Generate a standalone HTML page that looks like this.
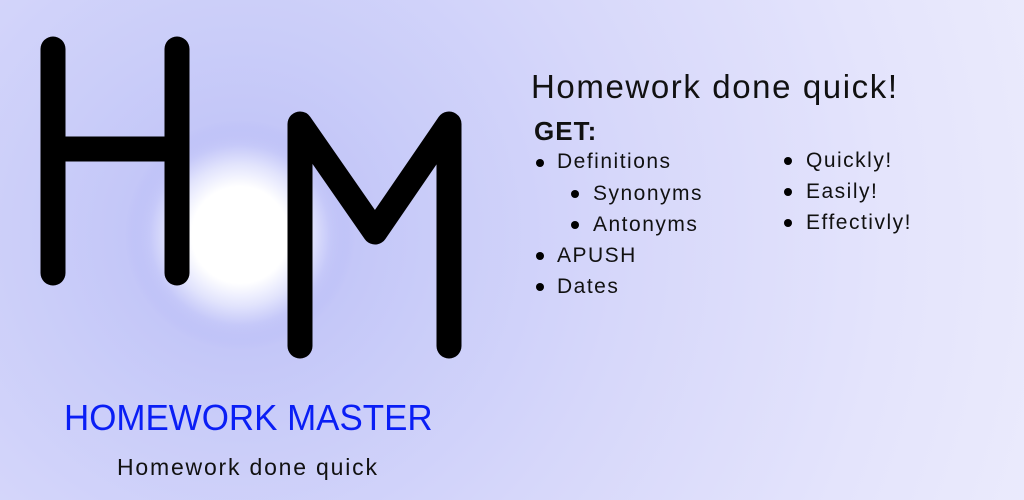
<!DOCTYPE html>
<html><head><style>
html,body{margin:0;padding:0}
body{width:1024px;height:500px;overflow:hidden;position:relative;font-family:"Liberation Sans",sans-serif;
background:radial-gradient(circle at 240px 235px,#ffffff 0,#ffffff 35px,#c2c5f8 90px,#cacdf9 200px,#d6d7fa 380px,#e4e4fc 650px,#ededfd 900px);}
.t{position:absolute;white-space:nowrap;color:#111;font-weight:300}
.b{position:absolute;width:8px;height:8px;border-radius:50%;background:#000}
</style></head><body>
<svg width="1024" height="500" style="position:absolute;left:0;top:0">
<defs><radialGradient id="g" cx="240" cy="235" r="115" gradientUnits="userSpaceOnUse">
<stop offset="0" stop-color="#fff"/><stop offset="0.42" stop-color="#fff"/><stop offset="0.62" stop-color="#e4e6fd" stop-opacity="0.8"/><stop offset="1" stop-color="#a8acf6" stop-opacity="0"/></radialGradient></defs>
<circle cx="240" cy="235" r="115" fill="url(#g)"/>
<g stroke="#000" stroke-width="25" stroke-linecap="round" stroke-linejoin="round" fill="none">
<path d="M53 49V273M177 49V273M53 149H177"/>
<path d="M300 346V124L375 232L449 124V346"/>
</g>
</svg>
<div class="t" style="left:64px;top:397px;font-size:36px;color:#0a1ef5;letter-spacing:0;transform:scaleX(0.97);transform-origin:0 0">HOMEWORK MASTER</div>
<div class="t" style="left:117px;top:454px;font-size:23px;letter-spacing:1.8px">Homework done quick</div>
<div class="t" style="left:531px;top:68px;font-size:33px;letter-spacing:1.6px">Homework done quick!</div>
<div class="t" style="left:534px;top:116px;font-size:26px;font-weight:bold;letter-spacing:1px">GET:</div>
<div class="b" style="left:536px;top:159px"></div><div class="t" style="left:557px;top:150px;font-size:21px;letter-spacing:1.5px">Definitions</div>
<div class="b" style="left:571px;top:190px"></div><div class="t" style="left:593px;top:182px;font-size:21px;letter-spacing:1.5px">Synonyms</div>
<div class="b" style="left:571px;top:221px"></div><div class="t" style="left:593px;top:213px;font-size:21px;letter-spacing:1.5px">Antonyms</div>
<div class="b" style="left:536px;top:252px"></div><div class="t" style="left:557px;top:244px;font-size:21px;letter-spacing:1.5px">APUSH</div>
<div class="b" style="left:536px;top:283px"></div><div class="t" style="left:557px;top:275px;font-size:21px;letter-spacing:1.5px">Dates</div>
<div class="b" style="left:784px;top:157px"></div><div class="t" style="left:806px;top:149px;font-size:21px;letter-spacing:1.5px">Quickly!</div>
<div class="b" style="left:784px;top:188px"></div><div class="t" style="left:806px;top:180px;font-size:21px;letter-spacing:1.5px">Easily!</div>
<div class="b" style="left:784px;top:219px"></div><div class="t" style="left:806px;top:211px;font-size:21px;letter-spacing:1.5px">Effectivly!</div>
</body></html>
